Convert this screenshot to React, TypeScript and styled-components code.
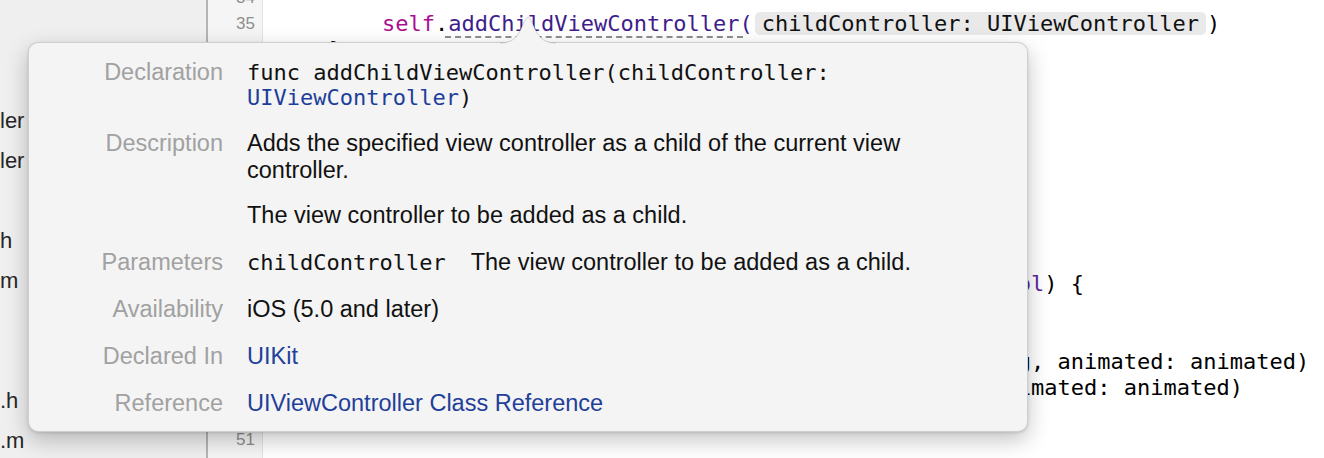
import React from "react";
import styled, { createGlobalStyle } from "styled-components";

const GlobalStyle = createGlobalStyle`
  html, body { margin: 0; padding: 0; background: #ffffff; overflow: hidden; }
  #root { width: 1324px; height: 458px; }
`;

const Workspace = styled.div`
  position: relative;
  display: flex;
  width: 1324px;
  height: 458px;
  overflow: hidden;
  background: #ffffff;
`;

const Navigator = styled.nav`
  flex: none;
  box-sizing: border-box;
  width: 208px;
  background: #efefef;
  border-right: 2px solid #b4b4b4;
  padding-top: 20.7px;
  overflow: hidden;
  font-family: "Liberation Sans", Arial, sans-serif;
  font-size: 22px;
  color: #262626;
`;

const NavItem = styled.div`
  height: 40px;
  line-height: 40px;
  white-space: nowrap;
`;

const Gutter = styled.div`
  flex: none;
  box-sizing: border-box;
  width: 55px;
  background: #f5f5f5;
  border-right: 1px solid #e2e2e2;
  padding-right: 7px;
  text-align: right;
  font-family: "Liberation Sans", Arial, sans-serif;
  font-size: 17px;
  line-height: 26px;
  color: #8e8e8e;
  overflow: hidden;
`;

const Scrolled = styled.div`
  margin-top: -14.6px;
`;

const LineNumber = styled.div`
  height: 26px;
`;

const Editor = styled.div`
  flex: 1;
  padding-left: 13px;
  font-family: "DejaVu Sans Mono", Menlo, monospace;
  font-size: 22px;
  line-height: 26px;
  color: #000000;
  white-space: pre;
  overflow: hidden;
`;

const CodeLine = styled.div`
  height: 26px;
`;

const Keyword = styled.span`
  color: #aa0d91;
`;

const Call = styled.span`
  color: #3f1d8c;
`;

const TypeName = styled.span`
  color: #5c2699;
`;

const ActiveCall = styled.span`
  color: #3f1d8c;
  padding: 0 3px;
  margin: 0 -3px;
  border-bottom: 2px dashed #8e8e8e;
`;

const Placeholder = styled.span`
  display: inline-block;
  line-height: 23px;
  padding: 0 7px;
  margin: 0 1px 0 2px;
  border-radius: 5px;
  background: #e9e9e9;
  color: #111111;
`;

const Popover = styled.div`
  position: absolute;
  left: 28px;
  top: 42px;
  box-sizing: border-box;
  width: 1000px;
  height: 390px;
  padding: 15.7px 40px 0 19px;
  background: #f4f4f4;
  border: 1px solid rgba(0, 0, 0, 0.15);
  border-radius: 10px;
  box-shadow: 0 8px 22px rgba(0, 0, 0, 0.24), 0 1px 3px rgba(0, 0, 0, 0.12);
`;

const Arrow = styled.svg`
  position: absolute;
  left: 471px;
  top: -27px;
  overflow: visible;
`;

const Details = styled.dl`
  margin: 0;
  display: grid;
  grid-template-columns: 175px minmax(0, 720px);
  column-gap: 24px;
  row-gap: 20px;
  align-items: baseline;
  font-family: "Liberation Sans", Arial, sans-serif;
  font-size: 23.5px;
  line-height: 27px;
  color: #111111;
`;

const Term = styled.dt`
  text-align: right;
  white-space: nowrap;
  color: #a1a1a1;
`;

const Definition = styled.dd`
  margin: 0;
`;

const Mono = styled.span`
  font-family: "DejaVu Sans Mono", Menlo, monospace;
  font-size: 22px;
  line-height: 25px;
`;

const MonoBlock = styled.div`
  font-family: "DejaVu Sans Mono", Menlo, monospace;
  font-size: 22px;
  line-height: 25px;
`;

const DocType = styled.span`
  color: #1d3e9a;
`;

const Para = styled.p`
  margin: 0;
  & + & {
    margin-top: 18px;
  }
`;

const ParamList = styled.div`
  display: grid;
  grid-template-columns: auto 1fr;
  column-gap: 25px;
  align-items: baseline;
`;

const DocLink = styled.a`
  color: #1f3f99;
  text-decoration: none;
  cursor: pointer;
`;

type Kind = "plain" | "kw" | "call" | "type" | "active" | "placeholder";
type Tok = [Kind, string];

const code: Tok[][] = [
  [],
  [
    ["plain", "        "],
    ["kw", "self"],
    ["plain", "."],
    ["active", "addChildViewController"],
    ["call", "("],
    ["placeholder", "childController: UIViewController"],
    ["plain", ")"],
  ],
  [["plain", "    }"]],
  [],
  [],
  [],
  [],
  [],
  [],
  [],
  [],
  [
    ["plain", "    "],
    ["kw", "override"],
    ["plain", " "],
    ["kw", "func"],
    ["plain", " setEditing(editing: "],
    ["type", "Bool"],
    ["plain", ", animated: "],
    ["type", "Bool"],
    ["plain", ") {"],
  ],
  [],
  [],
  [
    ["plain", "        "],
    ["kw", "self"],
    ["plain", ".childController."],
    ["call", "tableView"],
    ["plain", "."],
    ["call", "setEditing"],
    ["plain", "(editing, animated: animated)"],
  ],
  [
    ["plain", "        innerController."],
    ["call", "tableView"],
    ["plain", "."],
    ["call", "setEditing"],
    ["plain", "(editing, animated: animated)"],
  ],
  [],
  [],
];

const FIRST_LINE = 34;

const navItems: string[] = ["", "", "ler", "ler", "", "h", "m", "", "", ".h", ".m"];

function renderTok([kind, text]: Tok, i: number) {
  switch (kind) {
    case "kw":
      return <Keyword key={i}>{text}</Keyword>;
    case "call":
      return <Call key={i}>{text}</Call>;
    case "type":
      return <TypeName key={i}>{text}</TypeName>;
    case "active":
      return <ActiveCall key={i}>{text}</ActiveCall>;
    case "placeholder":
      return <Placeholder key={i}>{text}</Placeholder>;
    default:
      return <React.Fragment key={i}>{text}</React.Fragment>;
  }
}

export default function App() {
  return (
    <>
      <GlobalStyle />
      <Workspace>
        <Navigator>
          {navItems.map((text, i) => (
            <NavItem key={i}>{text}</NavItem>
          ))}
        </Navigator>
        <Gutter>
          <Scrolled>
            {code.map((_, i) => (
              <LineNumber key={i}>{FIRST_LINE + i}</LineNumber>
            ))}
          </Scrolled>
        </Gutter>
        <Editor>
          <Scrolled>
            {code.map((toks, i) => (
              <CodeLine key={i}>{toks.length ? toks.map(renderTok) : " "}</CodeLine>
            ))}
          </Scrolled>
        </Editor>

        <Popover>
          <Arrow width="56" height="28" viewBox="0 0 56 28">
            <path
              d="M0 27 C10 27 16 23.5 21 13 C24 6 26 1 28 1 C30 1 32 6 35 13 C40 23.5 46 27 56 27 L56 28 L0 28 Z"
              fill="#f4f4f4"
            />
            <path
              d="M0 27 C10 27 16 23.5 21 13 C24 6 26 1 28 1 C30 1 32 6 35 13 C40 23.5 46 27 56 27"
              fill="none"
              stroke="rgba(0,0,0,0.16)"
              strokeWidth="1"
            />
          </Arrow>
          <Details>
            <Term>Declaration</Term>
            <Definition>
              <MonoBlock>
                func addChildViewController(childController: <DocType>UIViewController</DocType>)
              </MonoBlock>
            </Definition>

            <Term>Description</Term>
            <Definition>
              <Para>Adds the specified view controller as a child of the current view controller.</Para>
              <Para>The view controller to be added as a child.</Para>
            </Definition>

            <Term>Parameters</Term>
            <Definition>
              <ParamList>
                <Mono>childController</Mono>
                <span>The view controller to be added as a child.</span>
              </ParamList>
            </Definition>

            <Term>Availability</Term>
            <Definition>iOS (5.0 and later)</Definition>

            <Term>Declared In</Term>
            <Definition>
              <DocLink>UIKit</DocLink>
            </Definition>

            <Term>Reference</Term>
            <Definition>
              <DocLink>UIViewController Class Reference</DocLink>
            </Definition>
          </Details>
        </Popover>
      </Workspace>
    </>
  );
}
